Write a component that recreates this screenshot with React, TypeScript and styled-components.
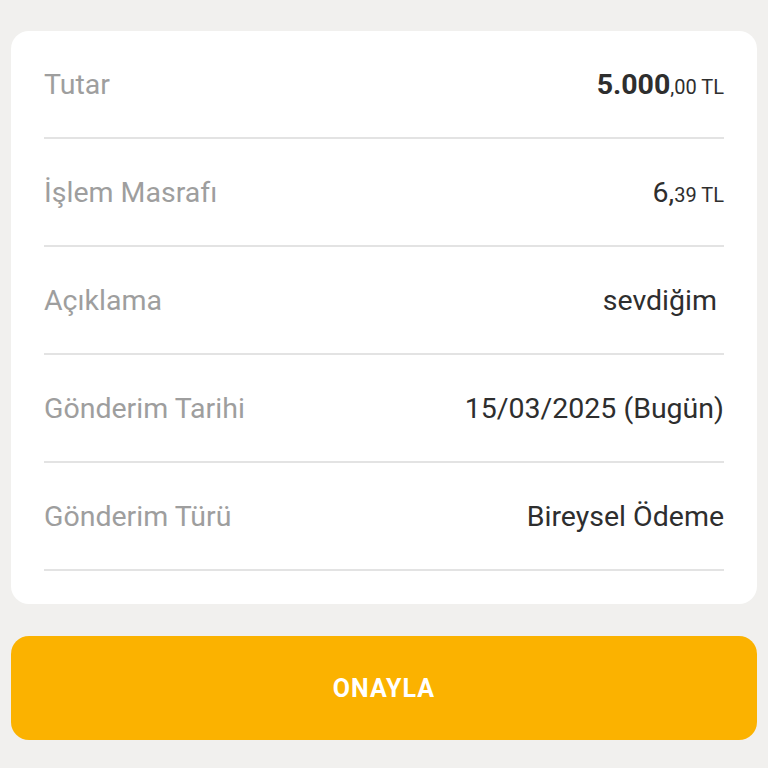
import React from "react";
import styled, { createGlobalStyle } from "styled-components";

const Global = createGlobalStyle`
  html, body { margin: 0; padding: 0; background: #f1f0ee; }
  body { font-family: Roboto, "Noto Sans", "Liberation Sans", sans-serif; }
`;

const Page = styled.div`
  width: 768px;
  height: 768px;
  box-sizing: border-box;
  padding: 31px 11px 0;
  display: flex;
  flex-direction: column;
  gap: 32px;
`;

const Card = styled.div`
  background: #ffffff;
  border-radius: 18px;
  padding: 0 33px 33px;
  display: flex;
  flex-direction: column;
`;

const Row = styled.div`
  height: 106px;
  display: flex;
  align-items: center;
  justify-content: space-between;
  border-bottom: 2px solid #e3e3e3;
`;

const Label = styled.span`
  font-size: 28.5px;
  color: #9e9e9e;
`;

const Value = styled.span<{ $bold?: boolean }>`
  font-size: 28.5px;
  color: #2e2e2e;
  font-weight: ${(p) => (p.$bold ? 700 : 400)};
  white-space: pre;
`;

const Small = styled.span`
  font-size: 20px;
  font-weight: 400;
`;

const Button = styled.button`
  height: 104px;
  border: none;
  border-radius: 18px;
  background: #fbb200;
  color: #ffffff;
  font-family: Roboto, "Noto Sans", sans-serif;
  font-size: 25px;
  font-weight: 700;
  letter-spacing: 1px;
`;

const rows: { label: string; value: React.ReactNode; bold?: boolean }[] = [
  {
    label: "Tutar",
    value: (
      <>
        5.000<Small>,00 TL</Small>
      </>
    ),
    bold: true,
  },
  {
    label: "İşlem Masrafı",
    value: (
      <>
        6,<Small>39 TL</Small>
      </>
    ),
  },
  { label: "Açıklama", value: "sevdiğim " },
  { label: "Gönderim Tarihi", value: "15/03/2025 (Bugün)" },
  { label: "Gönderim Türü", value: "Bireysel Ödeme" },
];

export default function App() {
  return (
    <>
      <Global />
      <Page>
        <Card>
          {rows.map((r) => (
            <Row key={r.label}>
              <Label>{r.label}</Label>
              <Value $bold={r.bold}>{r.value}</Value>
            </Row>
          ))}
        </Card>
        <Button>ONAYLA</Button>
      </Page>
    </>
  );
}
